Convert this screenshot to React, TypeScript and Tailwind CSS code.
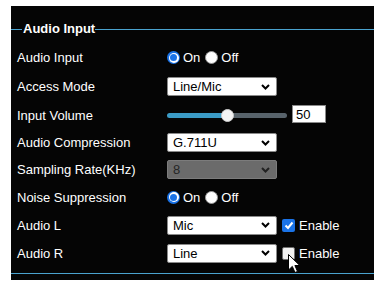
import type { ReactNode } from "react";

const font = { fontFamily: '"Liberation Sans", Arial, sans-serif' };

const Chevron = ({ color = "#000" }: { color?: string }) => (
  <svg width="9" height="6" viewBox="0 0 9 6" className="shrink-0">
    <polyline points="1,1 4.5,4.5 8,1" fill="none" stroke={color} strokeWidth="2" />
  </svg>
);

const Select = ({ value, disabled }: { value: string; disabled?: boolean }) => (
  <div
    className={
      disabled
        ? "w-[110px] h-[19px] flex items-center justify-between pl-[5px] pr-[6px] rounded-[2px] border border-[#7c7c7c] bg-[#6b6b6b] text-[#262626] text-[13px]"
        : "w-[110px] h-[19px] flex items-center justify-between pl-[5px] pr-[6px] rounded-[2px] border border-[#8a8a8a] bg-white text-black text-[13px]"
    }
  >
    <span className="leading-none">{value}</span>
    <Chevron color={disabled ? "#222" : "#000"} />
  </div>
);

const RadioOn = () => (
  <span className="block w-[13px] h-[13px] rounded-full bg-[#1a73e8] flex items-center justify-center">
    <span className="block w-[10px] h-[10px] rounded-full bg-white flex items-center justify-center">
      <span className="block w-[7px] h-[7px] rounded-full bg-[#1a73e8]" />
    </span>
  </span>
);

const RadioOff = () => (
  <span className="block w-[13px] h-[13px] rounded-full bg-white border border-[#9a9a9a]" />
);

const OnOff = () => (
  <div className="flex items-center text-[13px] text-white">
    <RadioOn />
    <span className="ml-[3px] leading-none">On</span>
    <span className="ml-[5px] block">
      <RadioOff />
    </span>
    <span className="ml-[3px] leading-none">Off</span>
  </div>
);

const Checkbox = ({ checked }: { checked?: boolean }) =>
  checked ? (
    <span className="w-[13px] h-[13px] rounded-[2px] bg-[#1a73e8] flex items-center justify-center">
      <svg width="10" height="9" viewBox="0 0 10 9">
        <polyline points="1.5,4.5 4,7 8.5,1.5" fill="none" stroke="#fff" strokeWidth="2" />
      </svg>
    </span>
  ) : (
    <span className="block w-[13px] h-[13px] rounded-[2px] bg-[#f2f2f2] border border-[#6f6f6f]" />
  );

const Row = ({ label, h, children }: { label: string; h: string; children: ReactNode }) => (
  <div className={`flex items-center ${h}`}>
    <div className="w-[150px] text-[13px] text-white leading-none">{label}</div>
    <div className="flex items-center">{children}</div>
  </div>
);

const Cursor = () => (
  <svg width="13" height="20" viewBox="0 0 13 20" className="absolute left-[6px] top-[7px]">
    <polygon
      points="0.5,0.5 0.5,16 4.3,12.4 7,18.5 9.5,17.4 6.9,11.5 11.8,11.5"
      fill="#fff"
      stroke="#000"
      strokeWidth="1"
      strokeLinejoin="round"
    />
  </svg>
);

export default function App() {
  return (
    <div className="w-[387px] h-[288px] bg-white pt-[6px] pl-[11px]" style={font}>
      <div className="w-[363px] h-[274px] bg-[#050505] pt-[14px]">
        <fieldset className="mx-0 min-w-0 border-x-0 border-y border-[#4aa3cf] pl-[6px] pt-[5px] pb-[6px]">
          <legend className="ml-[5px] pl-[1px] pr-0 text-[13px] font-bold text-white leading-[18px]">
            Audio Input
          </legend>
          <Row label="Audio Input" h="h-[29px]">
            <OnOff />
          </Row>
          <Row label="Access Mode" h="h-[29px]">
            <Select value="Line/Mic" />
          </Row>
          <Row label="Input Volume" h="h-[28px]">
            <div className="relative w-[120px] h-[14px] flex items-center">
              <div className="h-[5px] w-[61px] rounded-l-full bg-[#3b9bc6]" />
              <div className="h-[5px] flex-1 rounded-r-full bg-[#58636b]" />
              <span className="absolute left-[54px] top-[1px] w-[13px] h-[13px] rounded-full bg-[#f4f4f4] border border-[#cfcfcf]" />
            </div>
            <div className="ml-[5px] w-[34px] h-[18px] -mt-[2px] bg-white border border-[#8a8a8a] flex items-center pl-[3px] text-[13px] text-black leading-none">
              50
            </div>
          </Row>
          <Row label="Audio Compression" h="h-[27px]">
            <Select value="G.711U" />
          </Row>
          <Row label="Sampling Rate(KHz)" h="h-[27px]">
            <Select value="8" disabled />
          </Row>
          <Row label="Noise Suppression" h="h-[28px]">
            <OnOff />
          </Row>
          <Row label="Audio L" h="h-[28px]">
            <Select value="Mic" />
            <span className="ml-[5px] block">
              <Checkbox checked />
            </span>
            <span className="ml-[4px] text-[13px] text-white leading-none">Enable</span>
          </Row>
          <Row label="Audio R" h="h-[28px]">
            <Select value="Line" />
            <span className="ml-[5px] block relative">
              <Checkbox />
              <Cursor />
            </span>
            <span className="ml-[4px] text-[13px] text-white leading-none">Enable</span>
          </Row>
        </fieldset>
      </div>
    </div>
  );
}
